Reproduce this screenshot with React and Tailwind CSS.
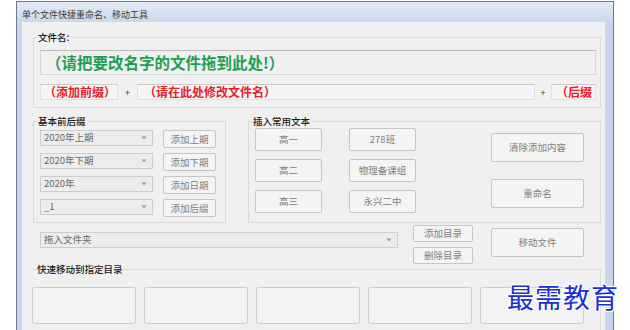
const F = { fontFamily: '"Noto Sans CJK SC", "Noto Sans", sans-serif' };

function Btn({ w, h, children, className = "" }) {
  return (
    <div
      className={`flex items-center justify-center rounded-[2px] border border-[#c6c6c6] bg-[#f4f4f4] text-[9.5px] text-[#808080] shrink-0 ${className}`}
      style={{ width: w, height: h }}
    >
      {children}
    </div>
  );
}

function Combo({ w, children }) {
  return (
    <div
      className="flex items-center justify-between h-[16px] border border-[#cdcdcd] bg-[#ececec] pl-[3px] pr-[5px] text-[9.5px] text-[#6a6a6a] shrink-0"
      style={{ width: w }}
    >
      <span className="leading-none">{children}</span>
      <svg width="6" height="4" viewBox="0 0 6 4"><path d="M0.5 0.5 L3 3.2 L5.5 0.5 Z" fill="#9a9a9a" /></svg>
    </div>
  );
}

function GLabel({ children }) {
  return (
    <div className="absolute left-[3px] top-[-7px] bg-[#f0f0f0] px-[1px] text-[9.5px] leading-[12px] text-[#1a1a1a] font-medium">
      {children}
    </div>
  );
}

export default function App() {
  return (
    <div className="w-[630px] h-[330px] bg-white overflow-hidden relative" style={F}>
      <div className="ml-[16px] mt-[1px] w-[598px] h-[329px] border border-b-0 border-[#6d7b8c] flex flex-col bg-[#c8d8ea]">
        <div className="h-[20px] shrink-0 bg-gradient-to-b from-[#e2ebf5] to-[#c9d9eb] flex items-center pt-[5px] pl-[5px] text-[9px] text-[#3a3a3a]">
          单个文件快捷重命名、移动工具
        </div>
        <div className="flex-1 flex">
          <div className="w-[5px] shrink-0 bg-[#c8d8ea]" />
          <div className="w-[583px] shrink-0 bg-[#f0f0f0] pl-[11px] flex flex-col">
            {/* group 1 */}
            <div className="relative mt-[15px] w-[568px] h-[71px] border border-[#dadada] pl-[6px] pt-[12px] shrink-0">
              <GLabel>文件名:</GLabel>
              <div className="w-[556px] h-[25px] border border-[#d6d6d6] border-t-[#b9b9b9] bg-[#f0f0f0] flex items-center pl-[5px] text-[15.5px] font-bold text-[#1f9f52] leading-none">
                （请把要改名字的文件拖到此处!）
              </div>
              <div className="mt-[9px] h-[16px] flex items-stretch text-[12px] font-bold text-[#e5202b] leading-none">
                <div className="w-[78px] border border-[#e0e0e0] border-t-[#c8c8c8] bg-[#f5f5f5] flex items-center pl-[3px]">（添加前缀）</div>
                <div className="w-[19px] flex items-center justify-center text-[9px] font-normal text-[#333]">+</div>
                <div className="w-[398px] border border-[#e0e0e0] border-t-[#c8c8c8] bg-[#f5f5f5] flex items-center pl-[6px]">（请在此处修改文件名）</div>
                <div className="w-[16px] flex items-center justify-center text-[9px] font-normal text-[#333]">+</div>
                <div className="w-[45px] border border-[#e0e0e0] border-t-[#c8c8c8] bg-[#f5f5f5] flex items-center pl-[4px] overflow-hidden whitespace-nowrap">（后缀</div>
              </div>
            </div>

            {/* groups 2 & 3 */}
            <div className="mt-[13px] flex gap-[22px] shrink-0">
              <div className="relative w-[193px] h-[102px] border border-[#dadada] pl-[6px] pt-[8px] flex flex-col gap-[5px]">
                <GLabel>基本前后缀</GLabel>
                {[
                  ["2020年上期", "添加上期"],
                  ["2020年下期", "添加下期"],
                  ["2020年", "添加日期"],
                  ["_1", "添加后缀"],
                ].map(([c, b]) => (
                  <div key={b} className="flex items-start gap-[10px] h-[18px]">
                    <Combo w={113}>{c}</Combo>
                    <Btn w={53} h={18}>{b}</Btn>
                  </div>
                ))}
              </div>
              <div className="relative w-[353px] h-[102px] border border-[#dadada] pl-[6px] pt-[6px] flex items-start">
                <GLabel>插入常用文本</GLabel>
                <div className="flex flex-col gap-[8px]">
                  <Btn w={67} h={23}>高一</Btn>
                  <Btn w={67} h={23}>高二</Btn>
                  <Btn w={67} h={23}>高三</Btn>
                </div>
                <div className="ml-[27px] flex flex-col gap-[8px]">
                  <Btn w={67} h={23}>278班</Btn>
                  <Btn w={67} h={23}>物理备课组</Btn>
                  <Btn w={67} h={23}>永兴二中</Btn>
                </div>
                <div className="ml-[75px] mt-[5px] flex flex-col gap-[17px]">
                  <Btn w={93} h={29}>清除添加内容</Btn>
                  <Btn w={93} h={29}>重命名</Btn>
                </div>
              </div>
            </div>

            {/* row 3 */}
            <div className="h-[42px] flex items-start pl-[7px] shrink-0">
              <div className="mt-[9px]">
                <Combo w={358}>拖入文件夹</Combo>
              </div>
              <div className="ml-[15px] mt-[2px] flex flex-col gap-[5px]">
                <Btn w={60} h={17}>添加目录</Btn>
                <Btn w={60} h={17}>删除目录</Btn>
              </div>
              <div className="ml-[18px] mt-[5px]">
                <Btn w={93} h={29}>移动文件</Btn>
              </div>
            </div>

            {/* group 4 */}
            <div className="relative mt-[4px] w-[568px] flex-1 border-t border-r border-[#dadada] pt-[17px] shrink-0">
              <GLabel>快速移动到指定目录</GLabel>
              <div className="flex gap-[8px] ml-[-1px]">
                {[0, 1, 2, 3, 4].map((i) => (
                  <div key={i} className="w-[104px] h-[37px] rounded-[2px] border border-[#cbcbcb] bg-[#f3f3f3]" />
                ))}
              </div>
            </div>
          </div>
          <div className="flex-1 bg-[#c8d8ea]" />
        </div>
      </div>
      <div
        className="absolute left-[507px] top-[280px] text-[27px] leading-[34px] tracking-[1px] text-[#1b2fd6]"
        style={{ textShadow: "0 0 2px #fff, 1px 1px 0 #fff, -1px -1px 0 #fff, 1px -1px 0 #fff, -1px 1px 0 #fff" }}
      >
        最需教育
      </div>
    </div>
  );
}
